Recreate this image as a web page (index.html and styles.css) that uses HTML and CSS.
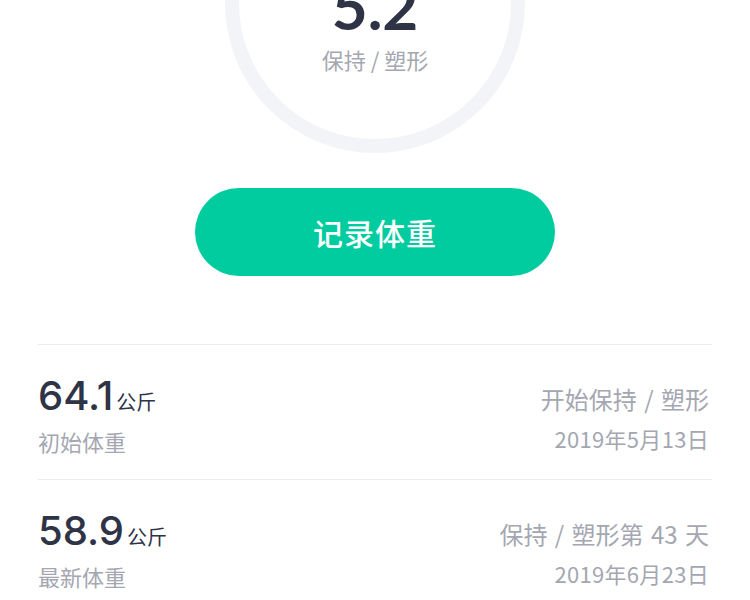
FILE: index.html
```
<!DOCTYPE html>
<html lang="zh-CN">

<head>
  <meta charset="UTF-8">
  <meta name="viewport" content="width=device-width, initial-scale=1.0">
  <title>体重记录</title>
  <link rel="stylesheet" href="styles.css">
</head>

<body>
  <main>
    <section class="gauge">
      <div class="ring">
        <div class="ring-value">5.2</div>
        <div class="ring-label">保持 / 塑形</div>
      </div>
    </section>

    <button class="record" type="button">记录体重</button>

    <ul class="stats">
      <li class="stat">
        <div class="stat-main">
          <div class="stat-value">64.1<span class="unit">公斤</span></div>
          <div class="stat-label">初始体重</div>
        </div>
        <div class="stat-side">
          <div class="stat-note">开始保持 / 塑形</div>
          <div class="stat-date">2019年5月13日</div>
        </div>
      </li>
      <li class="stat">
        <div class="stat-main">
          <div class="stat-value">58.9<span class="unit">公斤</span></div>
          <div class="stat-label">最新体重</div>
        </div>
        <div class="stat-side">
          <div class="stat-note">保持 / 塑形第 43 天</div>
          <div class="stat-date">2019年6月23日</div>
        </div>
      </li>
    </ul>
  </main>
</body>

</html>
```

FILE: styles.css
```
:root {
  --ink: #2e3346;
  --muted: #a4a7b1;
  --green: #00cc9f;
  --ring: #f3f4f7;
  --line: #ececef;
}

body {
  margin: 0;
  background: #fff;
  color: var(--ink);
  font-family: "Noto Sans CJK SC", "Noto Sans", sans-serif;
  overflow: hidden;
}

main {
  display: flex;
  flex-direction: column;
  align-items: center;
}

.gauge {
  display: flex;
  justify-content: center;
}

.ring {
  box-sizing: border-box;
  inline-size: 300px;
  block-size: 300px;
  margin-block-start: -147px;
  border: 14px solid var(--ring);
  border-radius: 50%;
  display: flex;
  flex-direction: column;
  align-items: center;
  justify-content: flex-end;
  padding-block-end: 66px;
}

.ring-value {
  font-family: Lato, "Noto Sans", sans-serif;
  font-weight: 700;
  font-size: 62px;
  line-height: 62px;
}

.ring-label {
  margin-block-start: 8px;
  font-size: 22px;
  line-height: 28px;
  color: var(--muted);
}

.record {
  margin-block-start: 35px;
  inline-size: 360px;
  block-size: 88px;
  border: none;
  border-radius: 44px;
  background: var(--green);
  color: #fff;
  font-family: "Noto Sans CJK SC", sans-serif;
  font-size: 30px;
  font-weight: 500;
  letter-spacing: 1px;
  cursor: pointer;
}

.stats {
  list-style: none;
  margin: 68px 38px 0;
  padding: 0;
  align-self: stretch;
}

.stat {
  display: flex;
  justify-content: space-between;
  border-block-start: 1px solid var(--line);
  padding: 26px 0 22px;
}

.stat-value {
  block-size: 44px;
  font-family: Inter, "Noto Sans", sans-serif;
  font-weight: 500;
  font-size: 40px;
  line-height: 50px;
}

.unit {
  font-family: "Noto Sans CJK SC", sans-serif;
  font-weight: 400;
  font-size: 20px;
  line-height: 1;
  margin-inline-start: 3px;
}

.stat-label {
  margin-block-start: 11px;
  font-size: 22px;
  line-height: 30px;
  color: var(--muted);
}

.stat-side {
  padding-block-start: 8px;
  padding-inline-end: 3px;
  text-align: right;
  color: var(--muted);
}

.stat-note {
  font-size: 24px;
  line-height: 40px;
  word-spacing: 2px;
}

.stat-date {
  font-size: 22px;
  line-height: 38px;
  letter-spacing: 0.3px;
}
```
